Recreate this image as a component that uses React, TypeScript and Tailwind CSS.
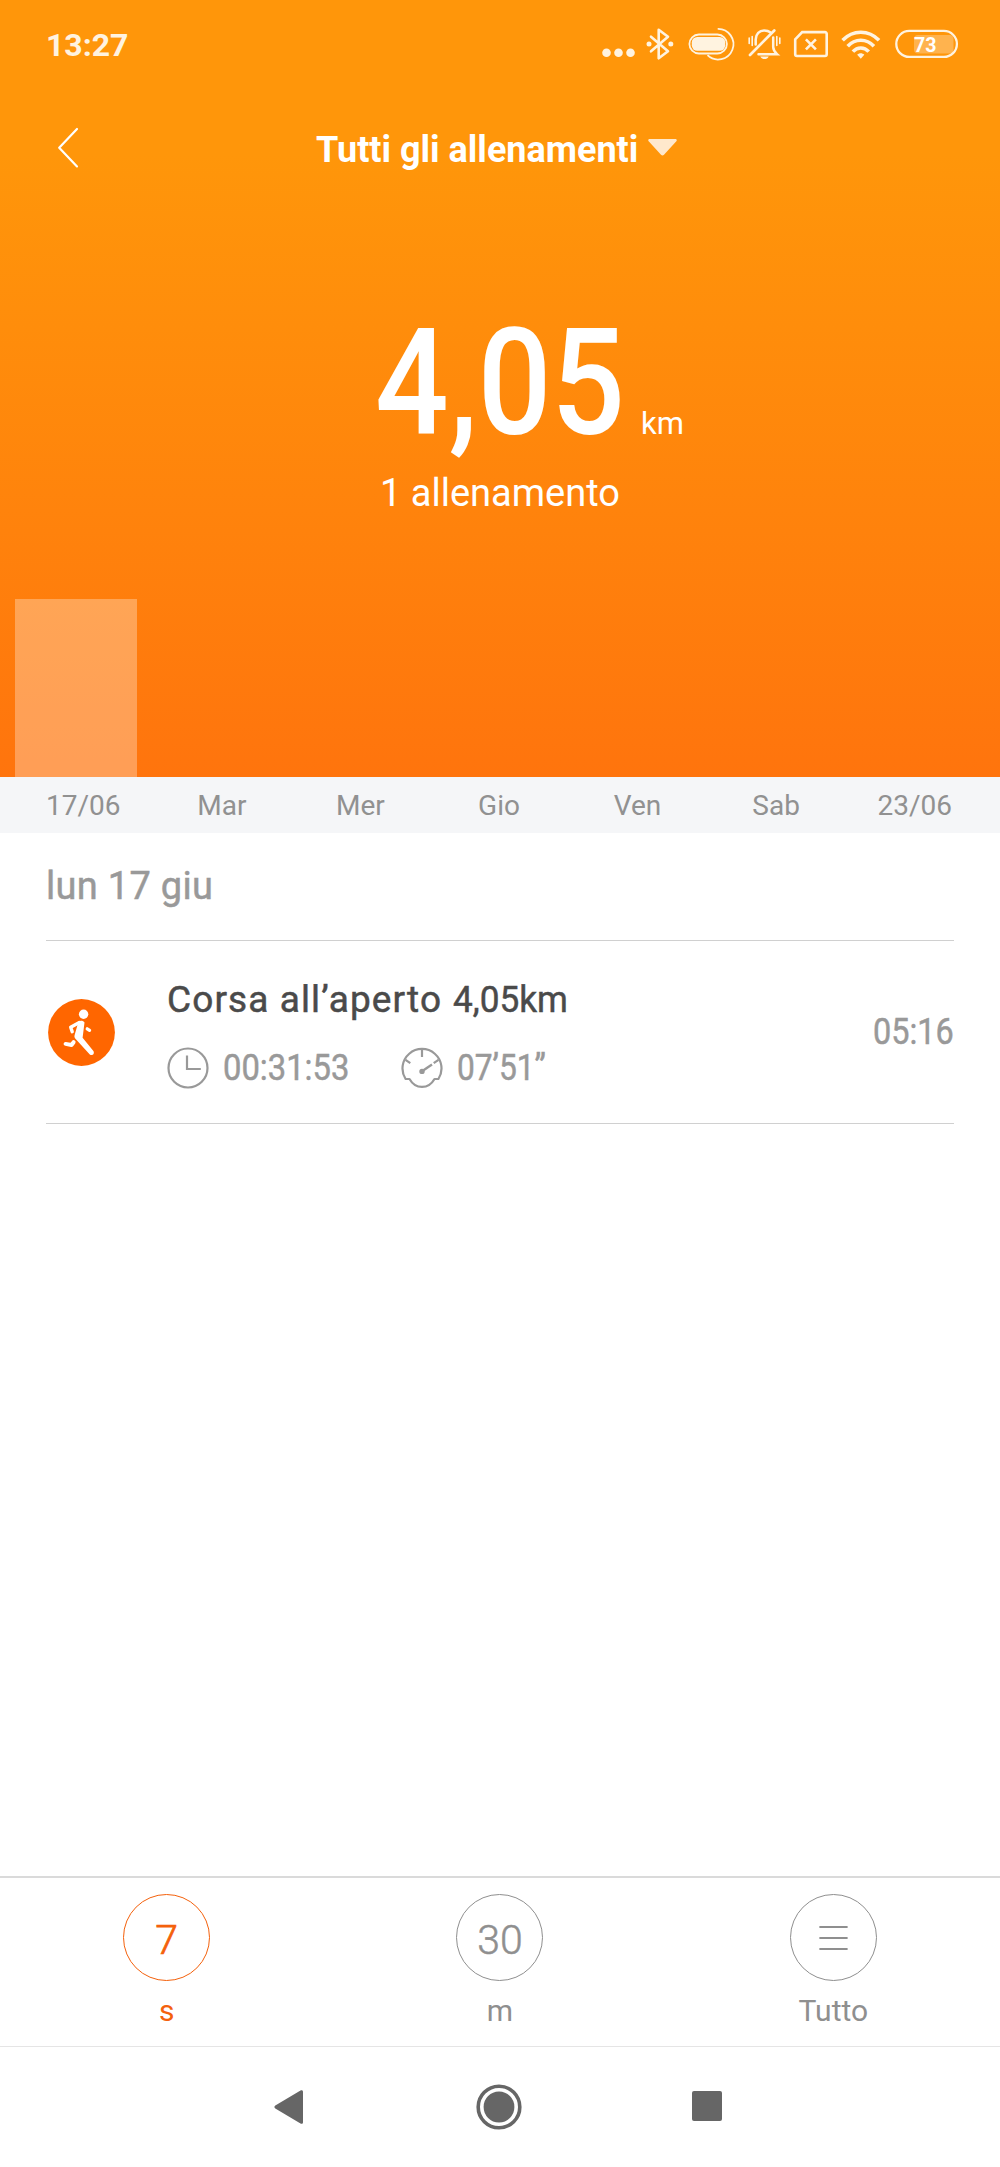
import type { ReactNode } from 'react';

const days = [
  { label: '17/06', value: 178 },
  { label: 'Mar', value: 0 },
  { label: 'Mer', value: 0 },
  { label: 'Gio', value: 0 },
  { label: 'Ven', value: 0 },
  { label: 'Sab', value: 0 },
  { label: '23/06', value: 0 },
];

function StatusIcons() {
  return (
    <div className="flex h-9 text-[#fff3e0]">
      <svg width="46" height="36" fill="currentColor">
        <circle cx="6.5" cy="26.7" r="4.3" />
        <circle cx="18.5" cy="26.7" r="4.3" />
        <circle cx="30.5" cy="26.7" r="4.3" />
      </svg>
      {/* Bluetooth */}
      <svg width="40" height="36" fill="none" stroke="currentColor" strokeWidth="2.6">
        <path d="M5 10.7 22 25.2 12.7 32.3V3.7L22 10.8 5 25.3" strokeLinejoin="round" strokeLinecap="round" />
        <circle cx="3" cy="18" r="2.5" fill="currentColor" stroke="none" />
        <circle cx="24.8" cy="18" r="2.5" fill="currentColor" stroke="none" />
      </svg>
      <svg width="60" height="36" fill="none" stroke="currentColor" strokeWidth="1.8">
        <rect x="3.4" y="8.5" width="37.5" height="19" rx="9.5" />
        <rect x="5.8" y="11" width="33.4" height="13.8" rx="5.5" fill="currentColor" stroke="none" />
        <path d="M31.7 2.9a15.3 15.3 0 1 1-10.2 26.3" />
      </svg>
      {/* Muted bell */}
      <svg width="46" height="36" fill="none" stroke="currentColor" strokeWidth="2.5" strokeLinecap="round">
        <path d="M4 29 28.3 4.5" strokeWidth="2.7" />
        <path d="M9.7 18.5V13.5C9.7 8 13.5 4.4 18.4 4.4c2.4 0 4.3.6 5.8 1.9" />
        <path d="M27.2 11.5V21c0 3 1.5 5 4 7.3H12.5" />
        <path d="M14.3 30.5h8.4c-.8 1.8-2.4 2.6-4.2 2.6s-3.4-.8-4.2-2.6z" fill="currentColor" stroke="none" />
        <path d="M3.2 12v5.5M6.2 10.5v9M30.8 10.5v9M33.8 12v5.5" strokeWidth="1.6" />
      </svg>
      <svg width="48" height="36" fill="none" stroke="currentColor" strokeWidth="2.6">
        <path d="M3.2 13.3 10.2 6.1H33a1.7 1.7 0 0 1 1.7 1.7v20.5A1.7 1.7 0 0 1 33 30H4.9a1.7 1.7 0 0 1-1.7-1.7z" />
        <path d="m13.9 13.3 10 10M23.9 13.3l-10 10" />
      </svg>
      {/* Wifi */}
      <svg width="54" height="36" fill="none" stroke="currentColor" strokeWidth="3.6">
        <path d="M2.6 14.2C12.9 3.5 28.7 3.5 39 14.2" />
        <path d="M7.7 20.2c7.4-8 18.8-8 26.2 0" />
        <path d="M12.9 25.6c4.5-4.9 11.3-4.9 15.8 0" />
        <path d="M17.2 28.8c2-2 5-2 7.1 0l-3.5 3.9z" fill="currentColor" stroke="none" />
      </svg>
      <svg width="66" height="36">
        <rect x="20" y="9" width="39.5" height="18.6" rx="4" fill="#fff" fillOpacity=".28" />
        <rect x="2.3" y="4.9" width="60.6" height="26" rx="13" fill="none" stroke="currentColor" strokeWidth="2.3" />
        <text x="20" y="25.6" textLength="22.5" lengthAdjust="spacingAndGlyphs" fill="#fff" className="font-['Roboto',sans-serif] text-[21px] font-bold">73</text>
      </svg>
    </div>
  );
}

function RunIcon() {
  return (
    <svg width="67" height="67" viewBox="0 0 67 67" fill="none" stroke="#fff" strokeLinecap="round" strokeLinejoin="round">
      <circle cx="33.5" cy="33.5" r="33.4" fill="#ff6600" stroke="none" />
      <circle cx="35.6" cy="15.2" r="4.7" fill="#fff" stroke="none" />
      <path d="M30.5 22.5c2-1.2 5-.8 6 1l-1.9 15.2 10.8 13.2c1.6 3-1.4 5.3-3.6 3.5L27.2 39.5c-1-1.3-.9-2.5-.5-3.7z" fill="#fff" stroke="none" />
      <path d="M31.3 23.6 22.7 28.2 24.2 32.7" strokeWidth="3.4" />
      <path d="m39.2 29.8 2.4 1.6" strokeWidth="3.2" />
      <path d="M25.6 43.2 23.5 46 17.6 44.9" strokeWidth="4" />
    </svg>
  );
}

function ClockIcon() {
  return (
    <svg width="42" height="42" viewBox="0 0 42 42" fill="none" stroke="#999" strokeWidth="2.2">
      <circle cx="21" cy="21" r="19.5" />
      <path d="M20 8.5V22h13.8" />
    </svg>
  );
}

function PaceIcon() {
  return (
    <svg width="42" height="42" viewBox="0 0 42 42" fill="none" stroke="#999" strokeWidth="2.2">
      <path d="M8.5 32H4.6A19.5 19.5 0 1 1 37.4 32H33.5C27.5 42.6 14.5 42.6 8.5 32z" strokeLinejoin="round" />
      <path d="M21 2v8M4.5 12.8l4.8 3.4M37.5 12.8l-4.8 3.4" />
      <path d="M21 24.2 31 17.6" strokeWidth="2.4" />
      <circle cx="21" cy="24.4" r="2.7" fill="#999" stroke="none" />
    </svg>
  );
}

function RangeTab({ label, active, children }: { label: string; active?: boolean; children: ReactNode }) {
  return (
    <div className={`flex flex-col items-center ${active ? 'text-[#f4610c]' : 'text-[#8f8f8f]'}`}>
      <div className="flex h-[87px] w-[87px] items-center justify-center rounded-full border border-current text-[41px] font-light">
        {children}
      </div>
      <span className="mt-[9px] text-[30px] leading-[42px]">{label}</span>
    </div>
  );
}

export default function App() {
  return (
    <div className="flex h-[2167px] w-[1000px] flex-col overflow-hidden bg-white font-['Roboto',sans-serif]">
      <header className="flex h-[777px] flex-col bg-linear-to-b from-[#ff960a] from-20% to-[#ff740d] text-white">
        <div className="flex h-[88px] items-center justify-between pr-10 pl-[46px]">
          <span className="mt-0.5 text-[32px] leading-none font-bold text-[#fff3e0]">13:27</span>
          <StatusIcons />
        </div>

        <div className="grid h-[120px] grid-cols-[316px_1fr] items-center">
          <svg width="24" height="42" className="ml-[56px]" fill="none" stroke="currentColor" strokeWidth="2.2" strokeLinecap="round" strokeLinejoin="round">
            <path d="M21 2 3.2 20.7 21 39.4" />
          </svg>
          <div className="flex items-center gap-2.5">
            <span className="mt-1 text-[36px] leading-none font-bold">Tutti gli allenamenti</span>
            <svg width="29" height="18" fill="#ffe8cc">
              <path d="M2 0h25c1.8 0 2.3 1.3 1.1 2.6L16 15.8c-.9 1-2.1 1-3 0L.9 2.6C-.3 1.3.2 0 2 0z" />
            </svg>
          </div>
        </div>

        <div className="mt-[101px] flex items-baseline pl-[375px]">
          <span className="w-[266px] origin-left scale-x-[0.87] text-[149px] leading-none font-medium">4,05</span>
          <span className="text-[31px]">km</span>
        </div>
        <p className="mt-[11px] text-center text-[38px] leading-[48px]">1 allenamento</p>

        <div className="mt-auto grid grid-cols-7 items-end px-[15px]">
          {days.map((day) => (
            <div key={day.label} className="w-[122px] bg-white/30" style={{ height: day.value }} />
          ))}
        </div>
      </header>

      <div className="grid h-14 grid-cols-7 items-center bg-[#f5f6f8] pt-0.5 pr-4 pl-3.5 text-center text-[28px] text-[#919191]">
        {days.map((day) => (
          <span key={day.label}>{day.label}</span>
        ))}
      </div>

      <main className="flex-1 px-[46px] text-[#999]">
        <h2 className="h-[108px] border-b border-[#d0d0d0] text-[38px] leading-[106px] tracking-[0.3px] [-webkit-text-stroke:0.5px]">
          lun 17 giu
        </h2>

        <div className="flex h-[183px] items-center border-b border-[#d0d0d0]">
          <div className="ml-0.5 w-[119px]">
            <RunIcon />
          </div>
          <div className="flex-1">
            <h3 className="flex text-[37px] leading-[50px] whitespace-nowrap text-[#4a4a4a] [-webkit-text-stroke:0.5px]">
              <span className="w-[286px] tracking-[1.1px]">Corsa all’aperto</span>
              <span className="origin-left scale-x-[0.95]">4,05km</span>
            </h3>
            <div className="mt-[22px] flex h-[42px] items-center text-[36px] [-webkit-text-stroke:0.5px]">
              <ClockIcon />
              <span className="ml-3.5 w-[178px] origin-left scale-x-[0.91]">00:31:53</span>
              <PaceIcon />
              <span className="ml-3.5 origin-left scale-x-[0.88]">07’51”</span>
            </div>
          </div>
          <span className="origin-right scale-x-[0.9] text-[36px] [-webkit-text-stroke:0.5px]">05:16</span>
        </div>
      </main>

      <nav className="grid h-[170px] grid-cols-3 border-t-2 border-[#dadada] pt-4">
        <RangeTab label="s" active>
          <span className="mt-1.5 [-webkit-text-stroke:0.7px]">7</span>
        </RangeTab>
        <RangeTab label="m">
          <span className="mt-1.5 [-webkit-text-stroke:0.5px]">30</span>
        </RangeTab>
        <RangeTab label="Tutto">
          <svg width="29" height="26" stroke="currentColor" strokeWidth="2.2" strokeLinecap="round">
            <path d="M1.2 2h26.6M1.2 13h26.6M1.2 24h26.6" />
          </svg>
        </RangeTab>
      </nav>

      {/* Android navigation buttons */}
      <footer className="flex h-[121px] items-center border-t border-[#e5e5e5] text-[#666]">
        <svg width="29" height="34" className="ml-[274px]" fill="currentColor">
          <path d="M1.3 15.5 26.5.6c1.3-.8 2.5-.2 2.5 1.2v30.4c0 1.4-1.2 2-2.5 1.2L1.3 18.5c-1.2-.8-1.2-2.2 0-3z" />
        </svg>
        <svg width="46" height="46" className="ml-[173px]" fill="none" stroke="currentColor">
          <circle cx="23" cy="23" r="20.8" strokeWidth="3.6" />
          <circle cx="23" cy="23" r="15.4" fill="currentColor" stroke="none" />
        </svg>
        <div className="-mt-0.5 ml-[170px] h-[30px] w-[30px] rounded-[2px] bg-current" />
      </footer>
    </div>
  );
}
